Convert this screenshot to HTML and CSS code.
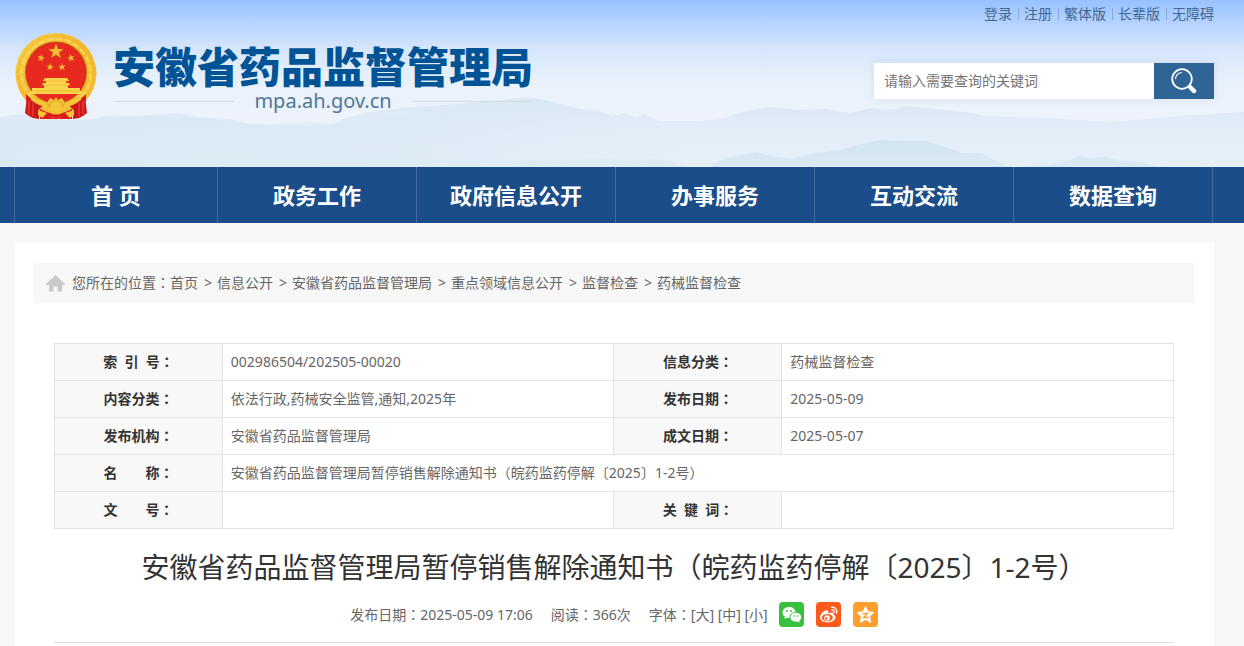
FILE: index.html
```html
<!DOCTYPE html>
<html lang="zh-CN">
<head>
<meta charset="utf-8">
<meta name="viewport" content="width=device-width, initial-scale=1">
<title>安徽省药品监督管理局</title>
<link rel="stylesheet" href="styles.css">
</head>
<body>
<header class="header">
  <svg class="scenery" viewBox="0 0 1244 167" preserveAspectRatio="none" aria-hidden="true">
    <defs>
      <linearGradient id="far" x1="0" y1="0" x2="0" y2="1"><stop offset="0" stop-color="#d9e8f4"/><stop offset=".3" stop-color="#dfebf7"/><stop offset="1" stop-color="#e4eff8" stop-opacity=".5"/></linearGradient>
      <linearGradient id="left" x1="0" y1="0" x2="1" y2="0"><stop offset="0" stop-color="#d8e8f3" stop-opacity=".8"/><stop offset=".6" stop-color="#d8e8f3" stop-opacity=".5"/><stop offset="1" stop-color="#dfebf6" stop-opacity="0"/></linearGradient>
      <linearGradient id="near" x1="0" y1="0" x2="0" y2="1"><stop offset="0" stop-color="#d2e4f2"/><stop offset="1" stop-color="#dae9f5"/></linearGradient>
    </defs>
    <path fill="url(#far)" d="M0 117L22 114 45 116 65 120 90 120 105 115 130 116 160 114 178 113 200 117 230 119 250 124 280 124 310 122 332 124 345 118 370 112 400 108 430 106 460 104 490 101 520 98 540 99 560 104 580 109 598 110 612 116 624 113 636 117 645 115 660 121 680 121 700 121 725 118 745 111 770 107 800 110 825 109 850 113 872 108 892 110 905 106 935 109 965 112 985 116 1050 118 1110 122 1180 116 1244 112V167H0Z"/>
    <path fill="url(#left)" d="M0 119Q60 122 105 118 180 112 250 124 320 128 380 118 460 108 540 112 640 130 720 167H0Z"/>
    <path fill="url(#near)" d="M710 167L725 158 742 155 756 152 768 155 790 159 815 153 840 150 865 143 882 140 900 141 925 141 945 147 963 153 980 153 992 159 1007 167H1022L1035 165 1050 165 1065 162 1078 156 1092 158 1106 157 1120 161 1142 162 1158 167Z"/>
    <path fill="#d8e7f3" opacity=".6" d="M510 167L530 161 560 162 588 159 605 158 635 162 655 159 672 162 685 167Z"/>
  </svg>
  <div class="header-inner">
    <a class="logo" href="#">
      <svg class="emblem" viewBox="0 0 82 87" role="img" aria-label="国徽">
        <defs>
          <linearGradient id="gold" x1="0" y1="0" x2="1" y2="1"><stop offset="0" stop-color="#f8cf45"/><stop offset=".5" stop-color="#f3b82c"/><stop offset="1" stop-color="#f6c437"/></linearGradient>
          <path id="star" d="M0-10L2.4-3.1 9.5-3.1 3.8 1.2 5.9 8.1 0 4 -5.9 8.1 -3.8 1.2 -9.5-3.1 -2.4-3.1Z"/>
        </defs>
        <circle cx="41" cy="40.500" r="40.500" fill="url(#gold)"/>
        <circle cx="41" cy="40.500" r="38" fill="none" stroke="#e0a422" stroke-width="1" stroke-dasharray="2 2 1 3" opacity=".7"/>
        <circle cx="41" cy="40.500" r="34.500" fill="none" stroke="#fadd68" stroke-width="2" stroke-dasharray="7 2" opacity=".8"/>
        <circle cx="41" cy="39.500" r="31" fill="#b96e12"/>
        <circle cx="41" cy="39.500" r="30.200" fill="#e7291f"/>
        <g fill="#f3bd35" stroke="#c98017" stroke-width=".6">
          <use href="#star" transform="translate(41 18.500) scale(.8)"/>
          <use href="#star" transform="translate(26 25) rotate(15) scale(.4)"/>
          <use href="#star" transform="translate(56 25) rotate(-15) scale(.4)"/>
          <use href="#star" transform="translate(35 34) rotate(8) scale(.4)"/>
          <use href="#star" transform="translate(47 34) rotate(-8) scale(.4)"/>
        </g>
        <path fill="#f9d34a" d="M30 45H52L54 48H28ZM31 48H51V50H31ZM28 50H54L55 52H27ZM29 52H53V55H29ZM17 55H65V58H17ZM14 58H68V61H14Z"/>
        <path stroke="#e5a429" stroke-width=".5" d="M28 48H54M27 52H55M14 58H68"/>
        <path fill="#cf171a" d="M11 61Q16 67 24 68L29 72 24 76 24 86 18 85 14 83 10 80Q12 70 11 61ZM71 61Q66 67 58 68L53 72 58 76 58 86 64 85 68 83 72 80Q70 70 71 61Z"/>
        <path fill="#f6c437" d="M15 60Q23 69 32 70L35 65 39 67 41 64 43 67 47 65 50 70Q59 69 67 60L66 67Q57 74 50 74 46 79 41 79 36 79 32 74 25 74 16 67Z"/>
        <path fill="#dc1b1b" d="M25 76Q41 85 57 76L57 86H25Z"/>
        <path fill="#f6c437" d="M23 77L32 80 27 85 23 82ZM59 77L50 80 55 85 59 82ZM31 76Q41 84 51 76L47 80Q41 83 35 80Z"/>
        <path fill="none" stroke="#d08b1e" stroke-width=".6" d="M35 73Q34 67 41 68 48 67 47 73M32 70L35 75M50 70L47 75"/>
        <path fill="none" stroke="#f0523c" stroke-width="1" d="M14 68V81M18 70V83M64 70V83M68 68V81M36 84L41 86 46 84"/>
      </svg>
      <span class="logo-text">
        <span class="logo-name">安徽省药品监督管理局</span>
        <span class="logo-domain">mpa.ah.gov.cn</span>
      </span>
    </a>
    <div class="tools">
      <ul class="top-links">
        <li><a href="#">登录</a></li>
        <li><a href="#">注册</a></li>
        <li><a href="#">繁体版</a></li>
        <li><a href="#">长辈版</a></li>
        <li><a href="#">无障碍</a></li>
      </ul>
      <form class="search" role="search">
        <input class="search-input" type="text" aria-label="搜索关键词" placeholder="请输入需要查询的关键词">
        <button class="search-button" type="button" aria-label="搜索">
          <svg width="26" height="26" viewBox="0 0 26 26" fill="none" stroke="#fff" aria-hidden="true">
            <circle cx="11" cy="11" r="9.800" stroke-width="1.800"/>
            <path d="M4.500 11A6.500 6.500 0 0 1 11 4.500" stroke-width="1.200"/>
            <path d="M17.500 17.500L19.500 19.500" stroke-width="2"/>
            <path d="M19.500 19.500L23 23" stroke-width="4.500" stroke-linecap="round"/>
          </svg>
        </button>
      </form>
    </div>
  </div>
</header>
<nav class="nav">
  <ul class="nav-list">
    <li><a href="#">首 页</a></li>
    <li><a href="#">政务工作</a></li>
    <li><a href="#">政府信息公开</a></li>
    <li><a href="#">办事服务</a></li>
    <li><a href="#">互动交流</a></li>
    <li><a href="#">数据查询</a></li>
  </ul>
</nav>
<main class="content">
  <div class="breadcrumb">
    <svg width="19" height="17" viewBox="0 0 19 17" fill="#c9c9c9" aria-hidden="true"><path d="M9.500 0L19 9V10H16V16.500H11.500V11.500H7.500V16.500H3V10H0V9Z"/></svg>
    <span>您所在的位置<span class="mark" lang="zh-TW">：</span><a href="#">首页</a><i>&gt;</i><a href="#">信息公开</a><i>&gt;</i><a href="#">安徽省药品监督管理局</a><i>&gt;</i><a href="#">重点领域信息公开</a><i>&gt;</i><a href="#">监督检查</a><i>&gt;</i><a href="#">药械监督检查</a></span>
  </div>
  <article class="article">
    <table class="info">
      <colgroup><col class="col-label"><col class="col-value"><col class="col-label"><col class="col-value"></colgroup>
      <tbody>
        <tr><th scope="row">索&nbsp;&nbsp;引&nbsp;&nbsp;号<span class="mark" lang="zh-TW">：</span></th><td>002986504/202505-00020</td><th scope="row">信息分类<span class="mark" lang="zh-TW">：</span></th><td>药械监督检查</td></tr>
        <tr><th scope="row">内容分类<span class="mark" lang="zh-TW">：</span></th><td>依法行政,药械安全监管,通知,2025年</td><th scope="row">发布日期<span class="mark" lang="zh-TW">：</span></th><td>2025-05-09</td></tr>
        <tr><th scope="row">发布机构<span class="mark" lang="zh-TW">：</span></th><td>安徽省药品监督管理局</td><th scope="row">成文日期<span class="mark" lang="zh-TW">：</span></th><td>2025-05-07</td></tr>
        <tr><th scope="row">名　　称<span class="mark" lang="zh-TW">：</span></th><td colspan="3">安徽省药品监督管理局暂停销售解除通知书<span class="mark" lang="zh-TW">（</span>皖药监药停解〔2025〕1-2号<span class="mark" lang="zh-TW">）</span></td></tr>
        <tr><th scope="row">文　　号<span class="mark" lang="zh-TW">：</span></th><td></td><th scope="row">关&nbsp;&nbsp;键&nbsp;&nbsp;词<span class="mark" lang="zh-TW">：</span></th><td></td></tr>
      </tbody>
    </table>
    <h1 class="title">安徽省药品监督管理局暂停销售解除通知书<span class="mark" lang="zh-TW">（</span>皖药监药停解〔2025〕1-2号<span class="mark" lang="zh-TW">）</span></h1>
    <div class="meta">
      <span>发布日期<span class="mark" lang="zh-TW">：</span>2025-05-09 17:06</span>
      <span>阅读<span class="mark" lang="zh-TW">：</span>366次</span>
      <span class="font-size">字体<span class="mark" lang="zh-TW">：</span><a href="#">[大]</a> <a href="#">[中]</a> <a href="#">[小]</a></span>
      <span class="share">
        <a class="share-link wechat" href="#" aria-label="分享到微信">
          <svg viewBox="0 0 25 25" aria-hidden="true"><path fill="#fff" d="M10 5C6 5 3.500 7.500 3.500 10.500 3.500 12.300 4.400 13.700 6 14.700L5.300 17 8 15.700 10.500 16C10.300 12.500 13 10 16.500 10 16 7 13.500 5 10 5Z"/><path fill="#fff" d="M16.800 10.800C13.700 10.800 11.500 12.800 11.500 15.300S13.700 19.700 16.800 19.700L18.500 19.500 20.800 20.700 20.200 18.700C21.400 17.900 22.200 16.700 22.200 15.300 22.200 12.800 19.900 10.800 16.800 10.800Z"/><g fill="#38c03f"><circle cx="7.800" cy="9" r="1"/><circle cx="12" cy="9" r="1"/><circle cx="15.200" cy="14" r=".8"/><circle cx="18.600" cy="14" r=".8"/></g></svg>
        </a>
        <a class="share-link weibo" href="#" aria-label="分享到微博">
          <svg viewBox="0 0 25 25" aria-hidden="true"><path fill="#fff" d="M10.500 8.200C8 8 4 12 4 15.300 4 18.500 7.500 20.500 11.500 20.500 16 20.500 19.500 18 19.500 15.300 19.500 13.700 18.500 12.900 17.200 12.500 17.700 10.600 16.300 9.700 12.200 11.200 12.800 9.300 12.100 8.300 10.500 8.200Z"/><ellipse cx="11.300" cy="15.700" rx="5.500" ry="3.700" fill="#ff5a1b"/><circle cx="11" cy="16" r="2.800" fill="#fff"/><circle cx="10.300" cy="16.500" r="1.200" fill="#ff5a1b"/><path fill="none" stroke="#fff" stroke-width="1.400" stroke-linecap="round" d="M15.500 5.300C19 4.700 21.500 7.500 20.500 11M15.800 8C17.500 7.700 18.500 9 18 10.500"/></svg>
        </a>
        <a class="share-link qzone" href="#" aria-label="分享到QQ空间">
          <svg viewBox="0 0 25 25" aria-hidden="true"><path fill="#fff" stroke="#fff" stroke-linejoin="round" d="M12.500 4.500L15 9.800 20.800 10.500 16.600 14.500 17.700 20.300 12.500 17.500 7.300 20.300 8.400 14.500 4.200 10.500 10 9.800Z"/><path fill="none" stroke="#ff9e2d" stroke-width="1.300" d="M9.500 11.500H14.500L10.500 15.500H15.500"/></svg>
        </a>
      </span>
    </div>
  </article>
</main>
</body>
</html>
```
FILE: styles.css
```css
* {
  box-sizing: border-box;
}

body {
  margin: 0;
  background: #f7f7f7;
  color: #666;
  font: 14px/20px "Noto Sans", "Noto Sans CJK SC", sans-serif;
}

a {
  color: inherit;
  text-decoration: none;
}

ul {
  margin: 0;
  padding: 0;
  list-style: none;
}

/* full-width punctuation centred in its cell */
.mark {
  font-family: "Noto Sans CJK TC", sans-serif;
  line-height: 1;
}

.header {
  position: relative;
  background: linear-gradient(#98c2ff 0, #b1d1ff 20px, #d5e5fb 48px, #e8f1fb 80px, #eef3fb 120px, #e6f0f9 100%);
}

.scenery {
  position: absolute;
  inset: 0;
  width: 100%;
  height: 100%;
}

.header-inner {
  position: relative;
  display: flex;
  justify-content: space-between;
  min-height: 167px;
  padding: 0 30px 0 14px;
}

.logo {
  display: flex;
  gap: 16px;
  padding: 33px 0 0 1px;
}

.emblem {
  width: 82px;
  height: 87px;
}

.logo-text {
  padding-top: 13px;
}

.logo-name {
  display: block;
  color: #005395;
  font-size: 42px;
  font-weight: 900;
  line-height: 42px;
}

.logo-domain {
  display: flex;
  align-items: center;
  gap: 20px;
  color: #4f7795;
  font-size: 20px;
  line-height: 26px;
}

.logo-domain::before,
.logo-domain::after {
  content: "";
  flex: 1;
  height: 1px;
  background: #d5dce2;
}

.tools {
  display: flex;
  flex-direction: column;
  align-items: flex-end;
  gap: 39px;
  padding-top: 4px;
}

.top-links {
  display: flex;
  color: #406791;
}

.top-links li {
  display: flex;
  align-items: center;
}

.top-links li + li::before {
  content: "";
  width: 1px;
  height: 12px;
  margin: 0 5px 0 6px;
  background: #88a9d3;
}

.search {
  display: flex;
  height: 36px;
  box-shadow: 0 0 8px rgba(80, 110, 150, 0.12);
}

.search-input {
  width: 280px;
  padding: 0 10px;
  border: 0;
  background: #fff;
  font: inherit;
}

.search-input::placeholder {
  color: #757575;
}

.search-button {
  display: flex;
  align-items: center;
  justify-content: center;
  width: 60px;
  padding: 0;
  border: 0;
  background: #2f6596;
}

.nav {
  padding: 0 31px 0 14px;
  background: #1a4d89;
}

.nav-list {
  display: flex;
  border-left: 1px solid #3f6c9d;
}

.nav-list li {
  flex: 1 1 0;
  border-right: 1px solid #3f6c9d;
}

.nav-list li:first-child {
  flex-grow: 1.02;
}

.nav-list a {
  display: block;
  color: #fff;
  font-size: 22px;
  font-weight: 700;
  line-height: 56px;
  text-align: center;
}

.content {
  margin: 20px 30px 0 14px;
  padding: 20px;
  background: #fff;
}

.breadcrumb {
  display: flex;
  align-items: center;
  gap: 7px;
  min-height: 40px;
  padding: 0 12px;
  background: #f7f7f7;
}

.breadcrumb i {
  margin: 0 5px 0 6px;
  font-style: normal;
}

.article {
  padding: 40px 20px 0;
}

.info {
  width: 100%;
  border-collapse: collapse;
  table-layout: fixed;
}

.col-label {
  width: 15%;
}

.col-value {
  width: 35%;
}

.info th,
.info td {
  height: 37px;
  padding: 0 8px;
  border: 1px solid #e3e3e3;
}

.info th {
  background: #f8f8f8;
  color: #333;
  font-weight: 700;
  text-align: center;
}

.title {
  margin: 18px 0 15px;
  color: #333;
  font-size: 28px;
  font-weight: 400;
  line-height: 40px;
  text-align: center;
}

.meta {
  display: flex;
  align-items: center;
  justify-content: center;
  gap: 18px;
  padding-bottom: 15px;
  border-bottom: 1px solid #ddd;
}

.font-size {
  word-break: keep-all;
}

.share {
  display: flex;
  gap: 12px;
  margin-left: -7px;
}

.share-link {
  width: 25px;
  height: 25px;
  border-radius: 4px;
}

.share-link svg {
  display: block;
}

.wechat {
  background: #38c03f;
}

.weibo {
  background: #ff5a1b;
}

.qzone {
  background: #ff9e2d;
}
```
